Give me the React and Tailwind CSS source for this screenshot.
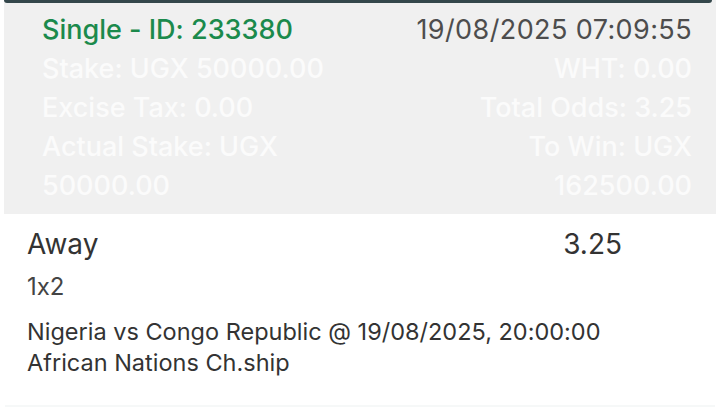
import React from "react";

const rows = [
  ["Stake: UGX 50000.00", "WHT: 0.00"],
  ["Excise Tax: 0.00", "Total Odds: 3.25"],
  ["Actual Stake: UGX 50000.00", "To Win: UGX 162500.00"],
];

export default function App() {
  return (
    <div className="w-[720px] h-[413px] bg-white overflow-hidden font-['Inter','Noto_Sans',sans-serif] [font-feature-settings:'calt'_0]">
      <div className="mx-[4px] bg-[#f0f0f0] relative pl-[38px] pr-[24px] pt-[10px] pb-[9px]">
        <div className="absolute top-0 left-0 right-[4px] h-[3px] bg-[#34474b] rounded-b-[3px]" />
        <div className="flex justify-between text-[27px] leading-[39px]">
          <span className="text-[#1b8a4c] font-medium">Single - ID: 233380</span>
          <span className="text-[#4d4d4d] tracking-[0.4px]">19/08/2025 07:09:55</span>
        </div>
        {rows.map(([l, r], i) => (
          <div key={i} className="grid grid-cols-2 text-[27px] leading-[39px] font-medium text-[#fbfbfb]">
            <span className="max-w-[300px]">{l}</span>
            <span className="text-right justify-self-end max-w-[220px]">{r}</span>
          </div>
        ))}
      </div>
      <div className="px-[27px] pt-[15px] text-[#333]">
        <div className="flex justify-between pr-[71px] text-[28px] leading-[30px]">
          <span>Away</span>
          <span>3.25</span>
        </div>
        <div className="mt-[13px] text-[24px] leading-[30px] text-[#444]">1x2</div>
        <div className="mt-[14px] text-[23.5px] leading-[31px] text-[#333]">
          <div>Nigeria vs Congo Republic @ 19/08/2025, 20:00:00</div>
          <div>African Nations Ch.ship</div>
        </div>
      </div>
      <div className="mt-[27px] mx-[5px] h-[2px] bg-[#f6f8f8]" />
    </div>
  );
}
